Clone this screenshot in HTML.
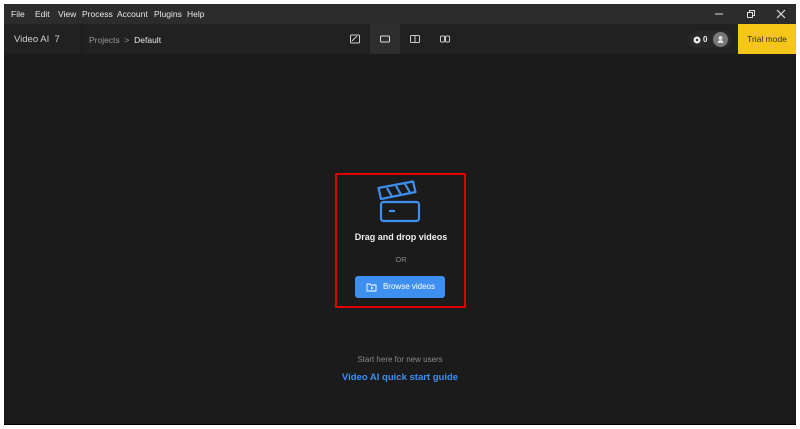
<!DOCTYPE html>
<html><head><style>
*{margin:0;padding:0;box-sizing:border-box}
body{width:800px;height:429px;background:#fff;font-family:"Liberation Sans",sans-serif;position:relative;overflow:hidden}
#app{position:absolute;left:4px;top:4px;width:792px;height:421px;background:#1b1b1b;border-bottom:1px solid #000}
.title{position:absolute;left:0;top:0;width:792px;height:20px;background:#2c2c2c;color:#e8e8e8;font-size:8.5px}
.title span{position:absolute;top:5px}
.tool{position:absolute;left:0;top:20px;width:792px;height:30px;background:#212121}
.t{position:absolute;font-size:8.5px}
.ic{position:absolute;top:0;width:30px;height:30px}
</style></head><body>
<div id="app">
<div class="title">
<span style="left:7px">File</span><span style="left:31px">Edit</span><span style="left:54px">View</span><span style="left:78px">Process</span><span style="left:113px">Account</span><span style="left:150px">Plugins</span><span style="left:183px">Help</span>
<svg style="position:absolute;left:710px;top:6px" width="10" height="8"><path d="M1 4h8" stroke="#ddd" stroke-width="1"/></svg>
<svg style="position:absolute;left:742px;top:5px" width="10" height="10"><rect x="1.5" y="3.5" width="5" height="5" fill="none" stroke="#ddd"/><path d="M3.5 3.5V1.5h5v5h-2" fill="none" stroke="#ddd"/></svg>
<svg style="position:absolute;left:772px;top:5px" width="10" height="10"><path d="M1 1l8 8M9 1l-8 8" stroke="#ddd" stroke-width="1.2"/></svg>
</div>
<div class="tool">
<div class="t" style="left:10px;top:10px;color:#cfcfcf;font-size:9.5px">Video AI&nbsp; 7</div>
<div style="position:absolute;left:77px;top:0;width:1px;height:30px;background:#1a1a1a"></div>
<div class="t" style="left:85px;top:11px;color:#999">Projects&nbsp;&nbsp;&gt;&nbsp;&nbsp;<b style="color:#e6e6e6;font-weight:normal">Default</b></div>
<div class="ic" style="left:336px"><svg width="30" height="30"><rect x="10.5" y="11" width="9" height="8" rx="1" fill="none" stroke="#ccc"/><path d="M12 17l5-5" stroke="#ccc"/></svg></div>
<div class="ic" style="left:366px;background:#2e2e2e"><svg width="30" height="30"><rect x="10.5" y="12" width="9" height="6" rx="1" fill="none" stroke="#ddd"/></svg></div>
<div class="ic" style="left:396px"><svg width="30" height="30"><rect x="10.5" y="11.5" width="9" height="7" rx="1" fill="none" stroke="#ccc"/><path d="M15 11v8" stroke="#ccc"/></svg></div>
<div class="ic" style="left:426px"><svg width="30" height="30"><rect x="10.5" y="12" width="4" height="6" rx="1" fill="none" stroke="#ccc"/><rect x="15.5" y="12" width="4" height="6" rx="1" fill="none" stroke="#ccc"/></svg></div>
<div style="position:absolute;left:684px;top:7px;width:44px;height:17px;border-radius:9px;background:#282828"></div>
<svg style="position:absolute;left:689px;top:12px" width="8" height="8"><circle cx="4" cy="4" r="3.5" fill="#eee"/><circle cx="4" cy="4" r="1.2" fill="#333"/></svg>
<div class="t" style="left:699px;top:11px;color:#eee;font-weight:bold;font-size:8px">0</div>
<div style="position:absolute;left:709px;top:8px;width:15px;height:15px;border-radius:50%;background:#777"><svg width="15" height="15"><circle cx="7.5" cy="6" r="2" fill="#ddd"/><path d="M4.5 11a3 3 0 0 1 6 0z" fill="#ddd"/></svg></div>
<div style="position:absolute;left:734px;top:0;width:58px;height:30px;background:#f5c518;color:#333;font-size:8.5px;line-height:30px;text-align:center">Trial mode</div>
</div>
<div style="position:absolute;left:331px;top:169px;width:131px;height:135px;border:2px solid #e00000"></div>
<svg style="position:absolute;left:370px;top:176px" width="48" height="46"><g fill="none" stroke="#3d8ff0" stroke-width="2.2" stroke-linejoin="round"><rect x="7" y="22" width="38" height="19" rx="2.5"/><path d="M7 19L4.5 8 39 1.5 41.5 12z"/><path d="M13 8l5 8.5M22 6l5 8.5M31 4l5 8.5"/><path d="M15 31h6"/></g></svg>
<div style="position:absolute;left:332px;top:228px;width:130px;text-align:center;color:#eee;font-size:9px;font-weight:bold">Drag and drop videos</div>
<div style="position:absolute;left:332px;top:251px;width:130px;text-align:center;color:#888;font-size:7.5px">OR</div>
<div style="position:absolute;left:351px;top:272px;width:90px;height:22px;border-radius:3px;background:#3d8ff0;color:#fff;font-size:8px;line-height:22px;text-align:right;padding-right:10px">Browse videos</div>
<svg style="position:absolute;left:362px;top:278px" width="11" height="10"><path d="M1 2h3l1 1h5v6H1z" fill="none" stroke="#fff" stroke-width="0.9"/><path d="M5 4.5v3l2.5-1.5z" fill="#fff"/></svg>
<div style="position:absolute;left:0;top:351px;width:792px;text-align:center;color:#888;font-size:8px">Start here for new users</div>
<div style="position:absolute;left:0;top:368px;width:792px;text-align:center;color:#3d8ff0;font-size:9.5px;font-weight:bold">Video AI quick start guide</div>
</div>
</body></html>
